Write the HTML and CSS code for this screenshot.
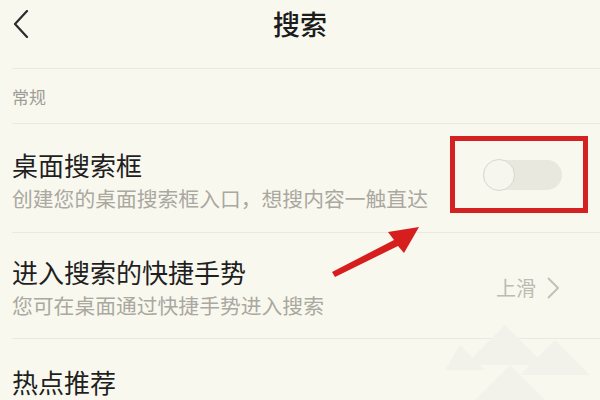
FILE: index.html
```html
<!DOCTYPE html>
<html lang="zh-CN">
<head>
    <meta charset="UTF-8">
    <meta name="viewport" content="width=device-width, initial-scale=1.0">
    <title>搜索</title>
    <link rel="stylesheet" href="styles.css">
</head>
<body>
    <header class="top-bar">
        <svg class="back" width="16" height="28" viewBox="0 0 16 28">
            <polyline points="14,1 2,14 14,27" fill="none" stroke="#2b2b2b" stroke-width="2.2" stroke-linecap="round" stroke-linejoin="round"/>
        </svg>
        <h1>搜索</h1>
    </header>

    <div class="section-label">常规</div>

    <div class="row first">
        <div class="row-text">
            <div class="row-title">桌面搜索框</div>
            <div class="row-sub">创建您的桌面搜索框入口，想搜内容一触直达</div>
        </div>
        <div class="mark-box">
            <div class="toggle"><span class="knob"></span></div>
        </div>
    </div>

    <div class="row second">
        <div class="row-text">
            <div class="row-title">进入搜索的快捷手势</div>
            <div class="row-sub">您可在桌面通过快捷手势进入搜索</div>
        </div>
        <div class="row-value">
            上滑
            <svg width="14" height="22" viewBox="0 0 14 22">
                <polyline points="2,1 12,11 2,21" fill="none" stroke="#c3c1b9" stroke-width="2" stroke-linejoin="round"/>
            </svg>
        </div>
    </div>

    <div class="row last">
        <div class="row-text">
            <div class="row-title">热点推荐</div>
        </div>
    </div>

    <!-- annotation arrow -->
    <svg class="arrow" width="600" height="400" viewBox="0 0 600 400">
        <polygon points="332,272 394,240 388,232 419,227 404,253 398,246 335,277" fill="#d71e1e"/>
    </svg>

    <!-- faint watermark -->
    <svg class="watermark" width="150" height="80" viewBox="0 0 150 80">
        <g fill="#f3f2ea">
            <polygon points="60,0 100,40 20,40"/>
            <polygon points="110,15 145,50 75,50"/>
            <polygon points="65,40 105,80 25,80"/>
            <polygon points="15,20 40,45 0,45"/>
        </g>
    </svg>
</body>
</html>
```

FILE: styles.css
```css
body {
    margin: 0;
    padding: 0;
    width: 600px;
    height: 400px;
    overflow: hidden;
    position: relative;
    background-color: #f9f8ef;
    font-family: "Noto Sans CJK SC", "Noto Sans", sans-serif;
    color: #1f1f1f;
}
.top-bar {
    height: 68px;
    position: relative;
    display: flex;
    justify-content: center;
    border-bottom: 1px solid #ebe9df;
    margin-left: 12px;
}
.top-bar .back {
    position: absolute;
    left: 1px;
    top: 10px;
}
.top-bar h1 {
    margin: 6px 0 0 -12px;
    font-size: 27px;
    font-weight: 500;
    line-height: 36px;
    color: #1c1c1c;
}
.section-label {
    height: 54px;
    line-height: 56px;
    margin-left: 12px;
    font-size: 17px;
    color: #9f9d95;
    border-bottom: 1px solid #ebe9df;
}
.row {
    margin-left: 12px;
    display: flex;
    align-items: flex-start;
    justify-content: space-between;
    border-bottom: 1px solid #ebe9df;
    box-sizing: border-box;
}
.row.first {
    height: 109px;
    padding-top: 24px;
}
.row.second {
    height: 106px;
    padding-top: 22px;
}
.row.last {
    border-bottom: none;
    padding-top: 26px;
}
.row-title {
    font-size: 26px;
    line-height: 34px;
    color: #1f1f1f;
}
.row-sub {
    font-size: 20.8px;
    line-height: 32px;
    color: #aaa89f;
}
.mark-box {
    margin: -12px 12px 0 0;
    width: 128px;
    height: 67px;
    border: 5px solid #d42121;
    display: flex;
    align-items: center;
    justify-content: center;
}
.toggle {
    width: 79px;
    height: 30px;
    border-radius: 15px;
    background-color: #e9e8df;
    position: relative;
    margin-left: 6px;
}
.toggle .knob {
    position: absolute;
    left: 0;
    top: -1px;
    width: 30px;
    height: 30px;
    border-radius: 50%;
    background-color: #f6f5ee;
    border: 1px solid #d9d8ce;
}
.row-value {
    margin: 18px 40px 0 0;
    display: flex;
    align-items: center;
    gap: 10px;
    font-size: 20px;
    line-height: 30px;
    color: #bdbbb3;
}
.arrow {
    position: absolute;
    left: 0;
    top: 0;
    pointer-events: none;
}
.watermark {
    position: absolute;
    left: 445px;
    top: 325px;
    pointer-events: none;
}
```
